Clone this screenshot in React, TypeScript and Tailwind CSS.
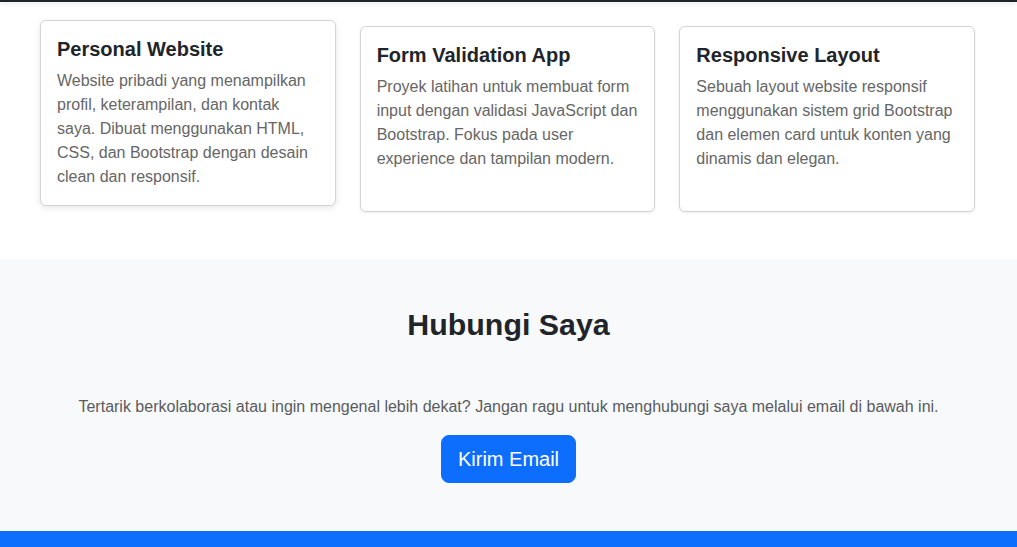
const projects = [
  {
    title: 'Personal Website',
    text: 'Website pribadi yang menampilkan profil, keterampilan, dan kontak saya. Dibuat menggunakan HTML, CSS, dan Bootstrap dengan desain clean dan responsif.',
    lifted: true,
  },
  {
    title: 'Form Validation App',
    text: 'Proyek latihan untuk membuat form input dengan validasi JavaScript dan Bootstrap. Fokus pada user experience dan tampilan modern.',
    lifted: false,
  },
  {
    title: 'Responsive Layout',
    text: 'Sebuah layout website responsif menggunakan sistem grid Bootstrap dan elemen card untuk konten yang dinamis dan elegan.',
    lifted: false,
  },
];

const App = () => {
  return (
    <div className="min-h-[547px] bg-white font-['Liberation_Sans',Arial,sans-serif] text-[#212529]">
      {/* bottom edge of navbar */}
      <div className="h-[2px] bg-[#212529] shadow-[0_2px_4px_rgba(0,0,0,0.12)]" />

      <section className="pt-6 pb-[47px]">
        <div className="ml-[40px] w-[935px] grid grid-cols-3 gap-6">
          {projects.map((p) => (
            <div
              key={p.title}
              className={
                p.lifted
                  ? 'bg-white border border-[#d3d4d5] rounded-md shadow-[0_2px_6px_rgba(0,0,0,0.1)] -translate-y-[6px]'
                  : 'bg-white border border-[#d3d4d5] rounded-md shadow-[0_1px_3px_rgba(0,0,0,0.08)]'
              }
            >
              <div className="p-4">
                <h5 className="text-[20px] leading-[24px] font-bold mb-2">{p.title}</h5>
                <p className="text-[16px] leading-[24px] text-[#666666]">{p.text}</p>
              </div>
            </div>
          ))}
        </div>
      </section>

      <section className="bg-[#f8f9fa] py-12 text-center">
        <h2 className="text-[30.35px] leading-[36px] font-bold mb-[52px]">Hubungi Saya</h2>
        <p className="text-[16px] leading-[24px] text-[#595c5f] mb-4">
          Tertarik berkolaborasi atau ingin mengenal lebih dekat? Jangan ragu untuk menghubungi saya melalui email di bawah ini.
        </p>
        <button className="bg-[#0d6efd] text-white text-[20px] leading-[30px] px-4 py-2 rounded-lg border border-[#0d6efd]">
          Kirim Email
        </button>
      </section>

      <footer className="bg-[#0d6efd] h-[16px]" />
    </div>
  );
};

export default App;
